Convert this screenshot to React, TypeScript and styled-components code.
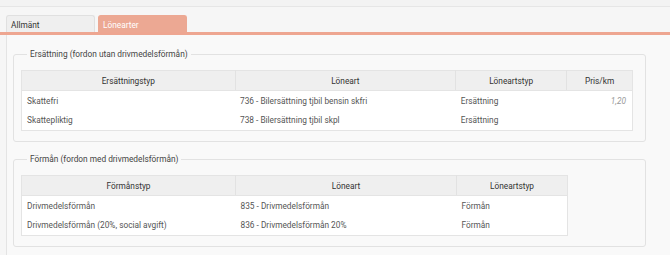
import styled, { createGlobalStyle } from "styled-components";

const GlobalStyle = createGlobalStyle`
  html, body {
    margin: 0;
    padding: 0;
    background: #f6f6f6;
    font-family: Roboto, "Liberation Sans", Arial, sans-serif;
    font-size: 8.3px;
    color: #555;
  }
`;

type Row = {
  typ: string;
  loneart: string;
  loneartstyp: string;
  pris?: string;
};

const ersattning: Row[] = [
  {
    typ: "Skattefri",
    loneart: "736 - Bilersättning tjbil bensin skfri",
    loneartstyp: "Ersättning",
    pris: "1,20",
  },
  {
    typ: "Skattepliktig",
    loneart: "738 - Bilersättning tjbil skpl",
    loneartstyp: "Ersättning",
    pris: "",
  },
];

const forman: Row[] = [
  {
    typ: "Drivmedelsförmån",
    loneart: "835 - Drivmedelsförmån",
    loneartstyp: "Förmån",
  },
  {
    typ: "Drivmedelsförmån (20%, social avgift)",
    loneart: "836 - Drivmedelsförmån 20%",
    loneartstyp: "Förmån",
  },
];

const App = () => {
  return (
    <>
      <GlobalStyle />
      <Page>
        <TopStrip />
        <TabBar>
          <Tab>Allmänt</Tab>
          <Tab $active>Lönearter</Tab>
        </TabBar>
        <Panel>
          <Group>
            <Legend>Ersättning (fordon utan drivmedelsförmån)</Legend>
            <Table>
              <colgroup>
                <col style={{ width: 214 }} />
                <col style={{ width: 221 }} />
                <col style={{ width: 111 }} />
                <col style={{ width: 66 }} />
              </colgroup>
              <thead>
                <tr>
                  <Th>Ersättningstyp</Th>
                  <Th>Löneart</Th>
                  <Th>Löneartstyp</Th>
                  <Th>Pris/km</Th>
                </tr>
              </thead>
              <tbody>
                {ersattning.map((r) => (
                  <tr key={r.typ}>
                    <Td>{r.typ}</Td>
                    <Td>{r.loneart}</Td>
                    <Td>{r.loneartstyp}</Td>
                    <Td $num>{r.pris}</Td>
                  </tr>
                ))}
              </tbody>
            </Table>
          </Group>
          <Group>
            <Legend>Förmån (fordon med drivmedelsförmån)</Legend>
            <Table>
              <colgroup>
                <col style={{ width: 214 }} />
                <col style={{ width: 221 }} />
                <col style={{ width: 111 }} />
              </colgroup>
              <thead>
                <tr>
                  <Th>Förmånstyp</Th>
                  <Th>Löneart</Th>
                  <Th>Löneartstyp</Th>
                </tr>
              </thead>
              <tbody>
                {forman.map((r) => (
                  <tr key={r.typ}>
                    <Td>{r.typ}</Td>
                    <Td>{r.loneart}</Td>
                    <Td>{r.loneartstyp}</Td>
                  </tr>
                ))}
              </tbody>
            </Table>
          </Group>
        </Panel>
      </Page>
    </>
  );
};

export default App;

const Page = styled.div`
  display: flex;
  flex-direction: column;
  min-height: 255px;
`;

const TopStrip = styled.div`
  height: 6px;
  border-bottom: 1px solid #e6e6e6;
  background: #f3f3f3;
`;

const TabBar = styled.div`
  display: flex;
  gap: 3px;
  padding: 8px 0 0 6px;
  border-bottom: 3px solid #eea691;
`;

const Tab = styled.div<{ $active?: boolean }>`
  box-sizing: border-box;
  width: 89px;
  height: 17px;
  padding: 1px 4px 0;
  line-height: 16px;
  border: 1px solid ${(p) => (p.$active ? "#eca893" : "#e0e0e0")};
  border-bottom: none;
  border-radius: 3px 3px 0 0;
  background: ${(p) => (p.$active ? "#eca893" : "#efefef")};
  color: ${(p) => (p.$active ? "#fff" : "#333")};
`;

const Panel = styled.div`
  flex: 1;
  display: flex;
  flex-direction: column;
  gap: 12px;
  margin-left: 6px;
  padding: 14px 24px 10px 6px;
  border-left: 1px solid #e4e4e4;
  background: #f9f9f9;
`;

const Group = styled.fieldset`
  margin: 0;
  min-width: 0;
  padding: 11px 12px 10px 7px;
  border: 1px solid #e2e2e2;
  border-radius: 3px;
`;

const Legend = styled.legend`
  margin-left: 6px;
  padding: 0 3px;
  line-height: 10px;
  color: #444;
`;

const Table = styled.table`
  border-collapse: collapse;
  table-layout: fixed;
  background: #fff;
  border: 1px solid #e4e4e4;
`;

const Th = styled.th`
  height: 19px;
  padding: 0 5px;
  background: #efefef;
  border-left: 1px solid #e2e2e2;
  border-bottom: 1px solid #e4e4e4;
  font-weight: 400;
  color: #333;
  text-align: center;

  &:first-child {
    border-left: none;
  }
`;

const Td = styled.td<{ $num?: boolean }>`
  height: 19.5px;
  padding: 0 6px 0 5px;
  white-space: nowrap;
  text-align: ${(p) => (p.$num ? "right" : "left")};
  color: ${(p) => (p.$num ? "#9a9a9a" : "#555")};
  font-style: ${(p) => (p.$num ? "italic" : "normal")};
`;
